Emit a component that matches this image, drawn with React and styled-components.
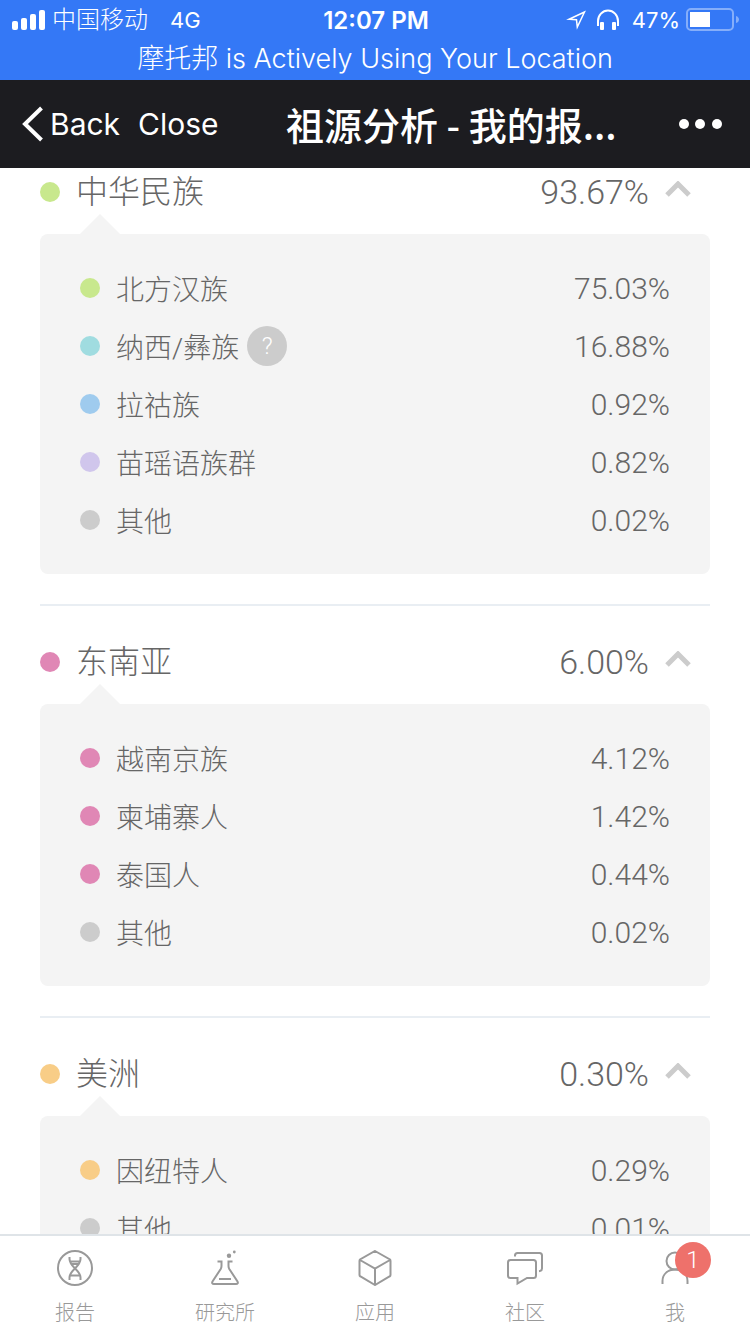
import React, { useState } from "react";
import styled, { createGlobalStyle } from "styled-components";

const GRAY = "#ccc";
const PINK = "#e087b5";
const ORANGE = "#f8cd87";

const regions = [
    {
        name: "中华民族",
        value: "93.67%",
        color: "#c8e88d",
        items: [
            { name: "北方汉族", value: "75.03%", color: "#c8e88d" },
            { name: "纳西/彝族", value: "16.88%", color: "#a0dce0", help: true },
            { name: "拉祜族", value: "0.92%", color: "#9fcbee" },
            { name: "苗瑶语族群", value: "0.82%", color: "#d0c6ec" },
            { name: "其他", value: "0.02%", color: GRAY },
        ],
    },
    {
        name: "东南亚",
        value: "6.00%",
        color: PINK,
        items: [
            { name: "越南京族", value: "4.12%", color: PINK },
            { name: "柬埔寨人", value: "1.42%", color: PINK },
            { name: "泰国人", value: "0.44%", color: PINK },
            { name: "其他", value: "0.02%", color: GRAY },
        ],
    },
    {
        name: "美洲",
        value: "0.30%",
        color: ORANGE,
        items: [
            { name: "因纽特人", value: "0.29%", color: ORANGE },
            { name: "其他", value: "0.01%", color: GRAY },
        ],
    },
];

const ReportIcon = () => (
    <TabIcon viewBox="0 0 36 36">
        <circle cx="18" cy="18" r="17" />
        <path d="M12.500 7v2c0 4 3 7 5.500 9.500s5.500 5 5.500 9V30M23.500 7v2c0 4-3 7-5.500 9.500s-5.500 5-5.500 9V30M13 11.500h10M15 14h6M13 25.500h10" />
    </TabIcon>
);

const LabIcon = () => (
    <TabIcon viewBox="0 0 36 36">
        <path d="M10.500 11.500h4V16q0 1.500-.8 3L5.500 31.500c-.8 1.500-.3 2.500 1.500 2.500h22c1.800 0 2.300-1 1.500-2.500L22.300 19q-.8-1.500-.8-3v-4.500H25.500M12 29h12" />
        <circle cx="22" cy="5.700" r="2.200" className="solid" />
        <circle cx="27.300" cy="2" r="1.400" className="solid" />
    </TabIcon>
);

const AppsIcon = () => (
    <TabIcon viewBox="0 0 36 36">
        <path d="M18 1 33 9.500Q33.500 10 33.500 11V25q0 1-1 1.500L18 35 3.500 26.500q-1-.5-1-1.500V11q0-1 .5-1.500ZM3 10l15 8.500L33 10M18 18.500V35" />
    </TabIcon>
);

const CommunityIcon = () => (
    <TabIcon viewBox="0 0 36 36">
        <path d="M3.500 10h23q2.500 0 2.500 2.500v13q0 2.500-2.500 2.500H20l-9.500 5.500V28h-7Q1 28 1 25.500v-13Q1 10 3.500 10ZM8 6.500V5.500Q8 3 10.500 3h22Q35 3 35 5.500v13q0 2.500-3 2.800" />
    </TabIcon>
);

const MeIcon = () => (
    <TabIcon viewBox="0 0 36 36">
        <circle cx="18" cy="11" r="8.500" />
        <path d="M5.500 34v-3C5.500 24 11 19.500 18 19.500S30.500 24 30.500 31v3" />
    </TabIcon>
);

const tabs = [
    { label: "报告", Icon: ReportIcon },
    { label: "研究所", Icon: LabIcon },
    { label: "应用", Icon: AppsIcon },
    { label: "社区", Icon: CommunityIcon },
    { label: "我", Icon: MeIcon, badge: 1 },
];

const Region = ({ region }) => {
    const [open, setOpen] = useState(true);

    return (
        <Section>
            <SectionButton aria-expanded={open} onClick={() => setOpen(!open)}>
                <Dot $color={region.color} />
                <span>{region.name}</span>
                <Value $large>{region.value}</Value>
                <Arrow viewBox="0 0 26 16" $open={open}>
                    <path d="m2 14 11-11 11 11" />
                </Arrow>
            </SectionButton>
            {open && (
                <Panel>
                    {region.items.map((item) => (
                        <Item key={item.name}>
                            <Dot $color={item.color} />
                            <span>{item.name}</span>
                            {item.help && <Help>?</Help>}
                            <Value>{item.value}</Value>
                        </Item>
                    ))}
                </Panel>
            )}
        </Section>
    );
};

const App = () => {
    return (
        <Page>
            <GlobalStyle />
            <Status>
                <StatusRow>
                    <StatusSide>
                        <svg width="34" height="20" viewBox="0 0 34 20" fill="#fff">
                            <rect x="0" y="11" width="6" height="9" rx="2" />
                            <rect x="9" y="8" width="6" height="12" rx="2" />
                            <rect x="18" y="4" width="6" height="16" rx="2" />
                            <rect x="27" y="0" width="6" height="20" rx="2" />
                        </svg>
                        <Carrier>中国移动</Carrier>
                        <span>4G</span>
                    </StatusSide>
                    <Time>12:07 PM</Time>
                    <StatusSide $end>
                        <svg width="20" height="20" viewBox="0 0 20 20" fill="none" stroke="#fff" strokeWidth="1.500">
                            <path d="M18.500 2 3 9.200l7.500.6.8 7.200Z" />
                        </svg>
                        <Headphones viewBox="0 0 24 22">
                            <path d="M2 17v-5a10 10.500 0 0 1 20 0v5" fill="none" stroke="#fff" strokeWidth="2" />
                            <rect x="4" y="13" width="4" height="8" rx="1" />
                            <rect x="16" y="13" width="4" height="8" rx="1" />
                        </Headphones>
                        <span>47%</span>
                        <Battery viewBox="0 0 54 24">
                            <rect x="1" y="1" width="46" height="21" rx="4" fill="none" stroke="#85aefa" strokeWidth="2" />
                            <rect x="4" y="4" width="20" height="15" fill="#fff" />
                            <path d="M50 8c4 1 4 6 0 7Z" fill="#85aefa" />
                        </Battery>
                    </StatusSide>
                </StatusRow>
                <Location>摩托邦 is Actively Using Your Location</Location>
            </Status>
            <NavBar>
                <NavButton>
                    <svg width="22" height="36" viewBox="0 0 22 36" fill="none" stroke="#fff" strokeWidth="4">
                        <path d="M19.500 2 3 18l16.500 16" />
                    </svg>
                    Back
                </NavButton>
                <NavButton>Close</NavButton>
                <Title>祖源分析 - 我的报...</Title>
                <NavButton aria-label="More">
                    <svg width="44" height="12" viewBox="0 0 44 12" fill="#fff">
                        <circle cx="6" cy="6" r="5" />
                        <circle cx="22" cy="6" r="5" />
                        <circle cx="39" cy="6" r="5" />
                    </svg>
                </NavButton>
            </NavBar>
            <Content>
                {regions.map((region) => (
                    <Region key={region.name} region={region} />
                ))}
            </Content>
            <TabBar>
                {tabs.map(({ label, Icon, badge }) => (
                    <Tab key={label}>
                        <IconBox>
                            <Icon />
                            {badge && <Badge>{badge}</Badge>}
                        </IconBox>
                        {label}
                    </Tab>
                ))}
            </TabBar>
        </Page>
    );
};

export default App;

const GlobalStyle = createGlobalStyle`
    * {
        box-sizing: border-box;
    }
    body {
        margin: 0;
        background: #fff;
        font-family: Roboto, "Noto Sans CJK SC", sans-serif;
        font-weight: 300;
        color: #666;
    }
    button {
        margin: 0;
        padding: 0;
        border: 0;
        background: none;
        font: inherit;
        color: inherit;
        cursor: pointer;
    }
    svg {
        flex: none;
    }
`;

const Page = styled.div`
    display: flex;
    flex-direction: column;
    height: 100vh;
`;

const Status = styled.header`
    background: #3478f6;
    color: #fff;
    font-family: Inter, "Noto Sans CJK SC", sans-serif;
    font-weight: 400;
`;

const StatusRow = styled.div`
    display: grid;
    grid-template-columns: 1fr auto 1fr;
    align-items: center;
    height: 40px;
    padding: 0 10px 0 12px;
`;

const StatusSide = styled.div`
    display: flex;
    align-items: center;
    justify-content: ${(props) => (props.$end ? "flex-end" : "flex-start")};
    font-size: 22px;
    line-height: 40px;
`;

const Carrier = styled.span`
    margin: 0 22px 0 6px;
    font-size: 24px;
    font-weight: 300;
`;

const Time = styled.div`
    font-size: 24px;
    font-weight: 600;
`;

const Headphones = styled.svg`
    width: 24px;
    height: 22px;
    margin: 0 12px 0 10px;
    fill: #fff;
`;

const Battery = styled.svg`
    width: 54px;
    height: 24px;
    margin-left: 6px;
`;

const Location = styled.div`
    height: 40px;
    line-height: 38px;
    font-size: 27px;
    font-weight: 300;
    text-align: center;
`;

const NavBar = styled.nav`
    display: flex;
    align-items: center;
    flex: none;
    height: 88px;
    padding: 0 28px 0 22px;
    background: #1c1c20;
    color: #fff;
    font-family: Inter, "Noto Sans CJK SC", sans-serif;
    font-size: 30px;
    font-weight: 400;
`;

const NavButton = styled.button`
    display: flex;
    align-items: center;
    gap: 6px;

    & + & {
        margin-left: 18px;
    }
`;

const Title = styled.h1`
    flex: 1;
    margin: 0;
    padding-left: 6px;
    font-family: "Noto Sans CJK SC", sans-serif;
    font-size: 38px;
    font-weight: 500;
    line-height: 84px;
    text-align: center;
    white-space: nowrap;
`;

const Content = styled.main`
    flex: 1;
    min-height: 0;
    padding: 0 40px;
    overflow-y: auto;
    scrollbar-width: none;
`;

const Value = styled.span`
    margin-left: auto;
    font-size: ${(props) => (props.$large ? 34 : 30)}px;
`;

const Dot = styled.i`
    flex: none;
    width: 20px;
    height: 20px;
    margin-right: 16px;
    border-radius: 50%;
    background: ${(props) => props.$color};
`;

const SectionButton = styled.button`
    display: flex;
    align-items: center;
    width: 100%;
    height: 48px;
    margin: 32px 0 18px;
    padding-right: 19px;
    font-size: 32px;
    line-height: 46px;
`;

const Section = styled.section`
    padding-bottom: 30px;
    border-bottom: 2px solid #e9eef3;

    &:first-child ${SectionButton} {
        margin-top: 0;
    }
`;

const Arrow = styled.svg`
    width: 26px;
    height: 16px;
    margin: 0 0 6px 16px;
    fill: none;
    stroke: #ccc;
    stroke-width: 5;
    transform: ${(props) => (props.$open ? "none" : "rotate(180deg)")};
`;

const Panel = styled.ul`
    position: relative;
    margin: 0;
    padding: 25px 40px;
    list-style: none;
    border-radius: 8px;
    background: #f4f4f4;

    &::before {
        content: "";
        position: absolute;
        left: 40px;
        bottom: 100%;
        border: 20px solid transparent;
        border-top: 0;
        border-bottom-color: #f4f4f4;
    }
`;

const Item = styled.li`
    display: flex;
    align-items: center;
    height: 58px;
    font-size: 28px;
`;

const Help = styled.button`
    width: 40px;
    height: 40px;
    margin-left: 8px;
    border-radius: 50%;
    background: #ccc;
    color: #fff;
    font-size: 24px;
    line-height: 40px;
`;

const TabBar = styled.nav`
    display: flex;
    flex: none;
    height: 100px;
    border-top: 2px solid #dfe4e8;
    background: #fff;
`;

const Tab = styled.button`
    display: flex;
    flex: 1;
    flex-direction: column;
    align-items: center;
    padding-top: 14px;
    color: #999;
    font-size: 20px;
    line-height: 30px;
`;

const IconBox = styled.span`
    position: relative;
    height: 36px;
    margin-bottom: 12px;
`;

const TabIcon = styled.svg`
    display: block;
    width: 36px;
    height: 36px;
    fill: none;
    stroke: #999;
    stroke-width: 2;

    .solid {
        fill: #999;
        stroke: none;
    }
`;

const Badge = styled.span`
    position: absolute;
    top: -8px;
    left: 18px;
    width: 36px;
    height: 36px;
    border-radius: 50%;
    background: #ee716b;
    color: #fff;
    font-size: 24px;
    line-height: 36px;
    text-align: center;
`;
